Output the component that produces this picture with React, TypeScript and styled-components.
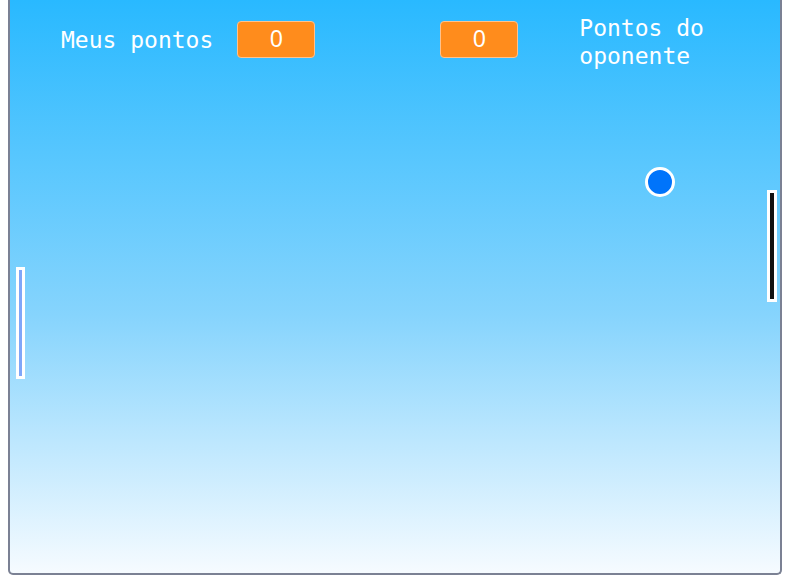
import React from "react";
import styled, { createGlobalStyle } from "styled-components";

const Global = createGlobalStyle`
  html, body { margin: 0; padding: 0; background: #ffffff; }
  body { font-family: "DejaVu Sans Mono", monospace; overflow: hidden; }
`;

const Board = styled.div`
  position: relative;
  box-sizing: border-box;
  width: 774px;
  height: 575px;
  margin: 0 0 0 8px;
  border: 2px solid #7b8194;
  border-top: none;
  border-radius: 0 0 5px 5px;
  background: linear-gradient(to bottom, #29b9ff 0%, #86d4fd 55%, #f6fbff 100%);
  overflow: hidden;
`;

const Header = styled.div`
  display: flex;
  align-items: center;
  padding: 14px 0 0 51px;
  height: 48px;
`;

const Label = styled.div<{ $width?: number; $ml?: number; $mt?: number }>`
  color: #ffffff;
  font-family: "DejaVu Sans Mono", monospace;
  font-size: 23px;
  line-height: 28px;
  width: ${(p) => (p.$width ? `${p.$width}px` : "auto")};
  margin-left: ${(p) => p.$ml ?? 0}px;
  margin-top: ${(p) => p.$mt ?? 0}px;
`;

const ScoreBox = styled.div<{ $ml: number }>`
  box-sizing: border-box;
  width: 78px;
  height: 37px;
  margin-left: ${(p) => p.$ml}px;
  margin-top: 2px;
  background: #ff8c1c;
  border: 1px solid #ffc28c;
  border-radius: 4px;
  color: #ffffff;
  font-family: "Liberation Sans", Arial, sans-serif;
  font-size: 23px;
  display: flex;
  align-items: center;
  justify-content: center;
`;

const Paddle = styled.div<{ $x: number; $y: number; $w: number; $color: string }>`
  position: absolute;
  left: ${(p) => p.$x}px;
  top: ${(p) => p.$y}px;
  width: ${(p) => p.$w}px;
  height: 106px;
  border: 3px solid #ffffff;
  background: ${(p) => p.$color};
`;

const Ball = styled.div`
  position: absolute;
  left: 635px;
  top: 167px;
  width: 24px;
  height: 24px;
  border-radius: 50%;
  border: 3px solid #ffffff;
  background: #0074fb;
`;

export default function App() {
  return (
    <>
      <Global />
      <Board>
        <Header>
          <Label $mt={3}>Meus pontos</Label>
          <ScoreBox $ml={24}>0</ScoreBox>
          <ScoreBox $ml={125}>0</ScoreBox>
          <Label $width={140} $ml={61} $mt={8}>Pontos do oponente</Label>
        </Header>
        <Paddle $x={6} $y={267} $w={3} $color="#7fa6f8" />
        <Paddle $x={757} $y={190} $w={4} $color="#111111" />
        <Ball />
      </Board>
    </>
  );
}
